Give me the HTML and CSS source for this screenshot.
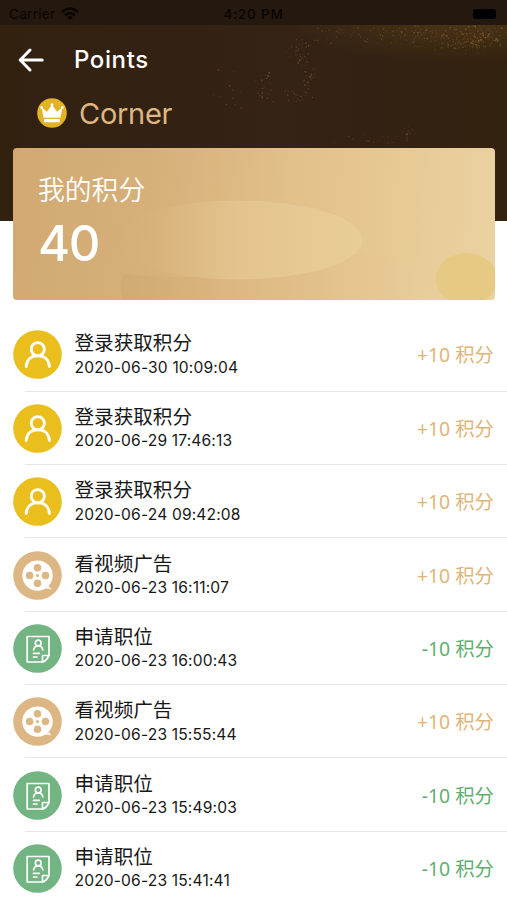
FILE: index.html
```html
<!DOCTYPE html>
<html lang="zh">
<head>
    <meta charset="UTF-8">
    <meta name="viewport" content="width=device-width, initial-scale=1.0">
    <title>Points</title>
    <link rel="stylesheet" href="styles.css">
</head>
<body>

    <!-- Shared icons -->
    <svg class="sprite" aria-hidden="true">
        <symbol id="icon-user" viewBox="0 0 49 49">
            <circle cx="24.5" cy="24.5" r="24.3" fill="#e9be1d"/>
            <g fill="none" stroke="#fff" stroke-width="2.9" stroke-linecap="round">
                <circle cx="24.8" cy="19.2" r="6.6"/>
                <path d="M13.2 36.5C13.6 29.7 18.4 25.8 24.8 25.8S36 29.7 36.4 36.5"/>
            </g>
        </symbol>
        <symbol id="icon-film" viewBox="0 0 49 49">
            <circle cx="24.5" cy="24.5" r="24.3" fill="#dcb783"/>
            <circle cx="24.5" cy="24.6" r="15.2" fill="#fff"/>
            <path d="M29 38.4C32 37.6 34.5 35 36.2 35.2L38.6 38.4L36 37.9L33 37.6Z" fill="#fff" opacity=".85"/>
            <g fill="#dcb783">
                <circle cx="24.5" cy="16.8" r="3.8"/>
                <circle cx="16.6" cy="24.5" r="3.8"/>
                <circle cx="32.5" cy="24.5" r="3.8"/>
                <circle cx="24.5" cy="32.3" r="3.8"/>
                <circle cx="24.5" cy="24.6" r="1.6"/>
            </g>
        </symbol>
        <symbol id="icon-job" viewBox="0 0 49 49">
            <circle cx="24.5" cy="24.5" r="24.3" fill="#72b482"/>
            <g fill="none" stroke="#fff" stroke-width="1.7" stroke-linecap="round" stroke-linejoin="round">
                <path d="M36 31.5V12.5H14.2V38H29.5"/>
                <path d="M36 31.5H29.5V38Q33 37.5 36 31.5Z"/>
                <circle cx="25.2" cy="19" r="2.9"/>
                <path d="M20.6 26C21 23.2 23 21.9 25.2 21.9S29.4 23.2 29.8 26"/>
                <path d="M20.5 29.4H26.3M20.5 33H24"/>
            </g>
        </symbol>
    </svg>

    <header class="header">
        <svg class="dust" id="dust" width="507" height="221" viewBox="0 0 507 221">
            <defs>
                <radialGradient id="glow">
                    <stop offset="0" stop-color="#60451a" stop-opacity=".55"/>
                    <stop offset="1" stop-color="#60451a" stop-opacity="0"/>
                </radialGradient>
            </defs>
            <ellipse cx="465" cy="20" rx="180" ry="42" fill="url(#glow)"/>
        </svg>

        <div class="status-bar">
            <div class="carrier">
                <span>Carrier</span>
                <svg width="18" height="14" viewBox="0 0 18 14">
                    <g fill="none" stroke="#080603" stroke-width="2.4">
                        <path d="M1 5Q9 -2 17 5"/>
                        <path d="M4 8.3Q9 4 14 8.3"/>
                    </g>
                    <path d="M6.2 10.2Q9 7.9 11.8 10.2L9 13Z" fill="#080603"/>
                </svg>
            </div>
            <span class="clock">4:20 PM</span>
            <span class="battery"></span>
        </div>

        <div class="nav">
            <svg width="26" height="24" viewBox="0 0 26 24">
                <path d="M12 2L2.2 12L12 22M2.5 12H24.2" fill="none" stroke="#fff" stroke-width="3" stroke-linecap="round" stroke-linejoin="round"/>
            </svg>
            <h1>Points</h1>
        </div>

        <div class="profile">
            <svg width="30" height="30" viewBox="0 0 30 30">
                <circle cx="15" cy="15" r="14.8" fill="#e2b325"/>
                <path d="M6.6 19.8L4.6 9.6L10 13.8L15 6.8L20 13.8L25.4 9.6L23.4 19.8Z" fill="#fff"/>
                <rect x="7" y="21" width="16" height="3.2" rx=".6" fill="#fff"/>
                <g fill="#fff">
                    <circle cx="4.6" cy="9.4" r="1.3"/>
                    <circle cx="15" cy="6.8" r="1.5"/>
                    <circle cx="25.4" cy="9.4" r="1.3"/>
                </g>
            </svg>
            <span>Corner</span>
        </div>
    </header>

    <section class="card">
        <svg class="card-shapes" viewBox="0 0 482 152">
            <defs>
                <linearGradient id="oval" x1="0" x2="1">
                    <stop offset="0" stop-color="#deba82" stop-opacity="0"/>
                    <stop offset=".15" stop-color="#deba82" stop-opacity=".1"/>
                    <stop offset=".5" stop-color="#e3c48f"/>
                    <stop offset="1" stop-color="#e9cd98"/>
                </linearGradient>
                <linearGradient id="wave" x1="0" x2="1">
                    <stop offset="0" stop-color="#cfa76f"/>
                    <stop offset=".5" stop-color="#dfba85"/>
                    <stop offset="1" stop-color="#e9ce9d"/>
                </linearGradient>
            </defs>
            <path d="M112 126Q180 134 255 121Q345 98 382 111Q415 124 425 152H111Q104 139 112 126Z" fill="url(#wave)" opacity=".6"/>
            <ellipse cx="225" cy="92" rx="125" ry="39.5" fill="url(#oval)"/>
            <ellipse cx="454" cy="131" rx="31" ry="26" fill="#e6ca84"/>
        </svg>
        <div class="card-label">我的积分</div>
        <div class="card-value">40</div>
    </section>

    <ul class="records">
        <li class="record">
            <svg class="record-icon"><use href="#icon-user"/></svg>
            <div class="record-info"><p class="title">登录获取积分</p><p class="date">2020-06-30 10:09:04</p></div>
            <span class="amount">+10 积分</span>
        </li>
        <li class="record">
            <svg class="record-icon"><use href="#icon-user"/></svg>
            <div class="record-info"><p class="title">登录获取积分</p><p class="date">2020-06-29 17:46:13</p></div>
            <span class="amount">+10 积分</span>
        </li>
        <li class="record">
            <svg class="record-icon"><use href="#icon-user"/></svg>
            <div class="record-info"><p class="title">登录获取积分</p><p class="date">2020-06-24 09:42:08</p></div>
            <span class="amount">+10 积分</span>
        </li>
        <li class="record">
            <svg class="record-icon"><use href="#icon-film"/></svg>
            <div class="record-info"><p class="title">看视频广告</p><p class="date">2020-06-23 16:11:07</p></div>
            <span class="amount">+10 积分</span>
        </li>
        <li class="record">
            <svg class="record-icon"><use href="#icon-job"/></svg>
            <div class="record-info"><p class="title">申请职位</p><p class="date">2020-06-23 16:00:43</p></div>
            <span class="amount minus">-10 积分</span>
        </li>
        <li class="record">
            <svg class="record-icon"><use href="#icon-film"/></svg>
            <div class="record-info"><p class="title">看视频广告</p><p class="date">2020-06-23 15:55:44</p></div>
            <span class="amount">+10 积分</span>
        </li>
        <li class="record">
            <svg class="record-icon"><use href="#icon-job"/></svg>
            <div class="record-info"><p class="title">申请职位</p><p class="date">2020-06-23 15:49:03</p></div>
            <span class="amount minus">-10 积分</span>
        </li>
        <li class="record">
            <svg class="record-icon"><use href="#icon-job"/></svg>
            <div class="record-info"><p class="title">申请职位</p><p class="date">2020-06-23 15:41:41</p></div>
            <span class="amount minus">-10 积分</span>
        </li>
    </ul>

    <script src="script.js"></script>
</body>
</html>
```
FILE: styles.css
```css
* {
    box-sizing: border-box;
}

body {
    margin: 0;
    height: 900px;
    overflow: hidden;
    background-color: #fff;
    font-family: "Inter", "Noto Sans CJK SC", sans-serif;
    color: #171717;
}

.sprite {
    position: absolute;
    width: 0;
    height: 0;
}

.header {
    position: relative;
    height: 220.5px;
    background: linear-gradient(90deg, #32210f, #342316 55%, #33220f);
}

.dust {
    position: absolute;
    top: 0;
    left: 0;
}

.status-bar {
    position: relative;
    display: grid;
    grid-template-columns: 1fr auto 1fr;
    align-items: center;
    height: 25px;
    padding: 2px 11px 0 9px;
    background-color: #25180e;
    color: #080603;
    font-size: 13.5px;
}

.carrier {
    display: flex;
    align-items: center;
    gap: 6px;
    letter-spacing: 0.3px;
}

.clock {
    padding-left: 2px;
    font-weight: 500;
    font-size: 13.5px;
    letter-spacing: 0.8px;
}

.battery {
    justify-self: end;
    width: 23px;
    height: 10px;
    border-radius: 3px;
    background-color: #000;
}

.nav {
    position: relative;
    display: flex;
    align-items: center;
    gap: 30px;
    height: 69px;
    padding-left: 18px;
}

.nav h1 {
    margin: 0;
    color: #fff;
    font-size: 24px;
    font-weight: 500;
    line-height: 30px;
    letter-spacing: 0.6px;
}

.profile {
    position: relative;
    display: flex;
    align-items: center;
    gap: 12px;
    height: 38px;
    padding-left: 37px;
    color: #ddb783;
    font-size: 29px;
    font-weight: 400;
    letter-spacing: -0.3px;
}

.card {
    position: relative;
    height: 152px;
    margin: -72.5px 12.5px 0 13px;
    padding: 26px 25px 0;
    border-radius: 4px;
    overflow: hidden;
    background: linear-gradient(95deg, #d1a971, #d7b07a 30%, #e2c18a 58%, #ebd2a1);
    color: #fff;
}

.card-shapes {
    position: absolute;
    top: 0;
    left: 0;
    width: 100%;
    height: 100%;
}

.card-label {
    position: relative;
    font-size: 26.8px;
    font-weight: 350;
    line-height: 32px;
}

.card-value {
    position: relative;
    margin-top: 13px;
    font-size: 49px;
    font-weight: 500;
    line-height: 50px;
    letter-spacing: -1.5px;
}

.records {
    margin: 18.3px 0 0;
    padding: 0;
    list-style: none;
}

.record {
    display: flex;
    align-items: center;
    height: 73.35px;
    padding: 0 13px;
    /* divider starts under the middle of the icon */
    background: linear-gradient(#e6e6e6, #e6e6e6) 25px 100% / 100% 1px no-repeat;
}

.record-icon {
    width: 49px;
    height: 49px;
    margin-right: 12.5px;
}

.record-info {
    flex: 1;
    padding-top: 1px;
}

.record p {
    margin: 0;
}

.title {
    font-size: 19.6px;
    line-height: 25.5px;
}

.date {
    font-size: 15.6px;
    line-height: 22.5px;
    letter-spacing: 0.15px;
}

.amount {
    padding-top: 1px;
    color: #dfb577;
    font-family: "Noto Sans", "Noto Sans CJK SC", sans-serif;
    font-size: 19.4px;
    font-weight: 400;
    line-height: 26px;
}

.minus {
    color: #5fae70;
}
```
FILE: script.js
```js
// Gold dust over the header: [x, y, spread x, spread y, count, opacity]
const clusters = [
    [475, 38, 45, 16, 220, 0.4],
    [415, 34, 45, 16, 90, 0.35],
    [345, 32, 50, 16, 40, 0.35],
    [300, 53, 16, 17, 35, 0.4],
    [308, 80, 9, 20, 28, 0.4],
    [265, 88, 14, 16, 25, 0.4],
    [295, 97, 16, 8, 16, 0.35],
    [232, 96, 22, 28, 12, 0.4],
    [407, 133, 10, 9, 12, 0.4],
    [367, 139, 42, 7, 18, 0.3]
];

let seed = 11;
function random() {
    seed = (seed * 16807) % 2147483647;
    return seed / 2147483647;
}

const dust = document.getElementById('dust');
clusters.forEach(([x, y, spreadX, spreadY, count, opacity]) => {
    for (let i = 0; i < count; i++) {
        const dot = document.createElementNS('http://www.w3.org/2000/svg', 'circle');
        dot.setAttribute('cx', x + (random() + random() - 1) * spreadX);
        dot.setAttribute('cy', y + (random() + random() - 1) * spreadY);
        dot.setAttribute('r', 0.4 + random() * 0.5);
        dot.setAttribute('fill', '#b98a4c');
        dot.setAttribute('opacity', opacity * (0.4 + random() * 0.6));
        dust.appendChild(dot);
    }
});
```
